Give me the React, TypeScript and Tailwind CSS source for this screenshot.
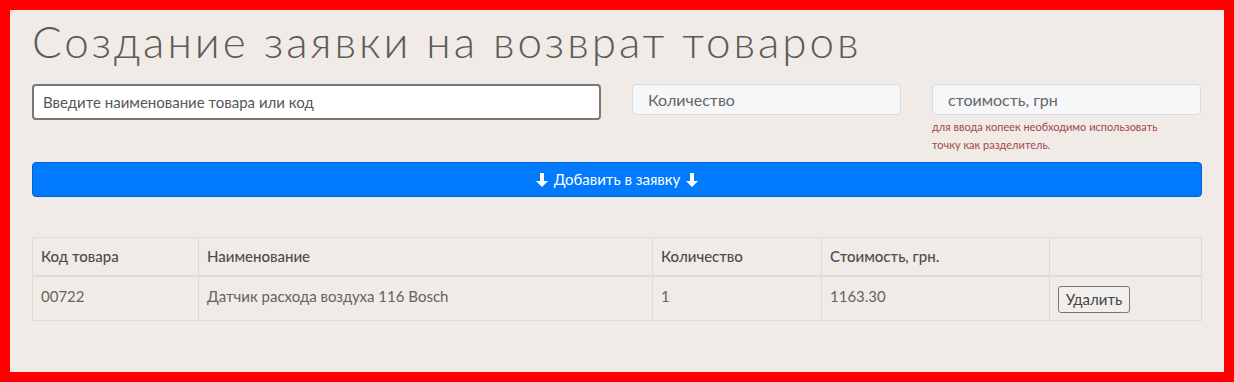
const font = { fontFamily: 'Lato, "Noto Sans", sans-serif' }

const Arrow = () => (
    <svg width="12" height="14" viewBox="0 0 12 14" className="inline-block">
        <path d="M4 0h4v8h4l-6 6-6-6h4z" fill="white" />
    </svg>
)

const ReturnForm = () => {
    return (
        <div className="flex w-full flex-col">
            <div className="flex flex-row items-start gap-[31px]">
                <input
                    className="h-[36px] w-[569px] rounded-[4px] border-2 border-[#7a7775] bg-white px-[9px] text-[15px] text-[#5a5654] placeholder:text-[#5a5654] outline-none"
                    placeholder="Введите наименование товара или код"
                />
                <input
                    className="h-[31px] w-[269px] rounded-[4px] border border-[#d8dbe0] bg-[#f6f7f9] px-[15px] text-[16px] text-[#666] placeholder:text-[#666] outline-none"
                    placeholder="Количество"
                />
                <div className="flex w-[269px] flex-col">
                    <input
                        className="h-[31px] w-full rounded-[4px] border border-[#d8dbe0] bg-[#f6f7f9] px-[15px] text-[16px] text-[#666] placeholder:text-[#666] outline-none"
                        placeholder="стоимость, грн"
                    />
                    <div className="mt-[3px] w-[250px] text-[11px] leading-[18px] text-[#a5474a]">
                        для ввода копеек необходимо использовать точку как разделитель.
                    </div>
                </div>
            </div>
            <button className="mt-[8px] flex h-[35px] w-full items-center justify-center gap-[6px] rounded-[4px] border border-[#0062cc] bg-[#007bff] text-[15px] text-white">
                <Arrow />
                <span>Добавить в заявку</span>
                <Arrow />
            </button>
        </div>
    )
}

const ItemsTable = () => {
    return (
        <table className="mt-[40px] w-full border-collapse text-left text-[#666260]">
            <thead>
                <tr className="h-[38px] text-[15px] text-[#4f4b49]">
                    <th className="w-[166px] border border-b-2 border-[#dedad7] px-[8px] font-medium">Код товара</th>
                    <th className="w-[454px] border border-b-2 border-[#dedad7] px-[8px] font-medium">Наименование</th>
                    <th className="w-[169px] border border-b-2 border-[#dedad7] px-[8px] font-medium">Количество</th>
                    <th className="w-[228px] border border-b-2 border-[#dedad7] px-[8px] font-medium">Стоимость, грн.</th>
                    <th className="border border-b-2 border-[#dedad7] px-[8px]"></th>
                </tr>
            </thead>
            <tbody>
                <tr className="h-[45px] align-top text-[15px]">
                    <td className="border border-[#dedad7] px-[8px] pt-[8px]">00722</td>
                    <td className="border border-[#dedad7] px-[8px] pt-[8px]">Датчик расхода воздуха 116 Bosch</td>
                    <td className="border border-[#dedad7] px-[8px] pt-[8px]">1</td>
                    <td className="border border-[#dedad7] px-[8px] pt-[8px]">1163.30</td>
                    <td className="border border-[#dedad7] px-[8px] pt-[9px]">
                        <button className="h-[27px] w-[72px] rounded-[3px] border border-[#777] bg-[#f1efed] text-[15px] text-[#444]">
                            Удалить
                        </button>
                    </td>
                </tr>
            </tbody>
        </table>
    )
}

export default function App() {
    return (
        <main style={font} className="h-[382px] w-[1234px] border-[10px] border-[#ff0000] bg-[#f0ebe7]">
            <div className="flex flex-col px-[22px] pt-[5px]">
                <h1 className="text-[44px] font-light leading-[52px] tracking-[3px] text-[#5e5a57]">
                    Создание заявки на возврат товаров
                </h1>
                <div className="mt-[17px]">
                    <ReturnForm />
                </div>
                <ItemsTable />
            </div>
        </main>
    )
}
